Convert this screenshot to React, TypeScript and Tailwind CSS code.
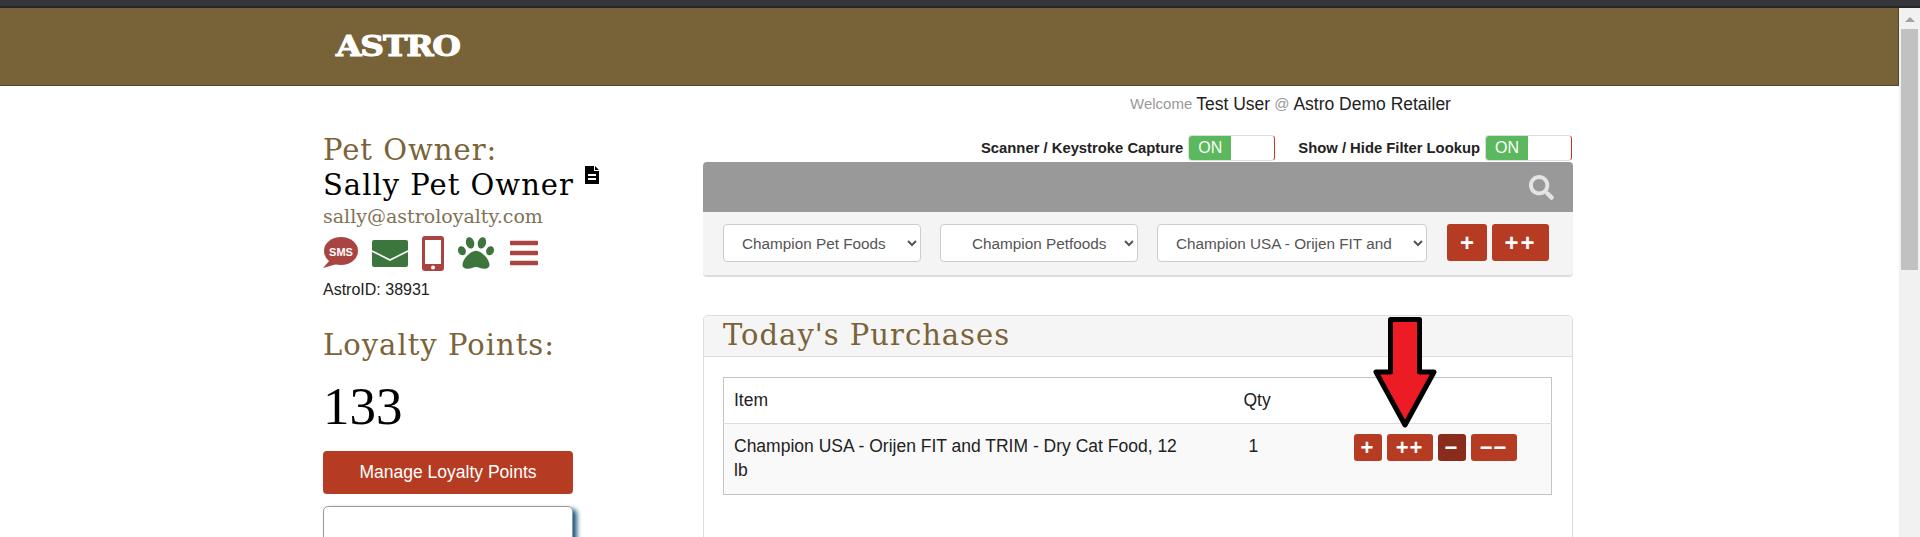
import { FaBars, FaPaw, FaSearch } from 'react-icons/fa';

const headingFont = "font-['DejaVu_Serif',serif]";

function ToggleRow({ label }: { label: string }) {
  return (
    <div className="flex items-center gap-[5px]">
      <span className="text-[14.8px] font-bold whitespace-nowrap text-[#222]">{label}</span>
      <div className="flex h-[26px] w-[87px] overflow-hidden rounded-[4px] border border-[#ddd] border-r-[#c9302c] p-0">
        <span className="flex h-full w-[42px] items-center justify-center bg-[#5cb85c] text-[16px] text-white">ON</span>
      </div>
    </div>
  );
}

function SmallButton({ label, wide, dark }: { label: string; wide?: boolean; dark?: boolean }) {
  return (
    <button
      className={`flex h-[27px] items-center justify-center rounded-[3px] text-[22px] leading-none font-bold tracking-[1px] text-white ${
        wide ? 'w-[46px]' : 'w-[28px]'
      } ${dark ? 'bg-[#8a2c1b]' : 'bg-[#b53b22]'}`}
    >
      {label}
    </button>
  );
}

function ContactIcons() {
  return (
    <div className="mt-[7px] flex h-[36px] items-center">
      <svg width="35" height="32" viewBox="0 0 35 32" className="mr-[14px]">
        <ellipse cx="18" cy="14" rx="17" ry="14" fill="#a94442" />
        <path d="M7 23 L0 31 L14 27 Z" fill="#a94442" />
        <text x="18" y="18.5" textAnchor="middle" fontSize="11" fontWeight="700" fill="#fff" fontFamily="Liberation Sans">
          SMS
        </text>
      </svg>
      <svg width="36" height="27" viewBox="0 0 36 27" className="mr-[14px]">
        <rect width="36" height="27" rx="2" fill="#3c763d" />
        <path d="M0 11 L18 20 L36 11" fill="none" stroke="#fff" strokeWidth="1.6" />
      </svg>
      <svg width="22" height="35" viewBox="0 0 22 35" className="mr-[14px]">
        <rect width="22" height="35" rx="3" fill="#a94442" />
        <rect x="3" y="4" width="16" height="24" fill="#fff" />
        <circle cx="11" cy="31.5" r="2" fill="#fff" />
      </svg>
      <FaPaw size={36} className="mr-[14px] text-[#3c763d]" />
      <FaBars size={32} className="text-[#a94442]" />
    </div>
  );
}

function Sidebar() {
  return (
    <aside className="w-[250px] shrink-0 pt-[47px]">
      <h3 className={`${headingFont} h-[35px] text-[29px] leading-[34px] tracking-[1px] text-[#7a6338]`}>Pet Owner:</h3>
      <div className="flex">
        <h3 className={`${headingFont} h-[34px] text-[29px] leading-[34px] tracking-[1px] whitespace-nowrap text-black`}>Sally Pet Owner</h3>
        <svg width="14" height="18" viewBox="0 0 14 18" className="mt-[-2px] ml-[11px] shrink-0">
          <path d="M0 0 H9 V5 H14 V18 H0 Z M10 0 L14 4 H10 Z M3 8 V10 H11 V8 Z M3 12 V14 H11 V12 Z" fill="#000" fillRule="evenodd" />
        </svg>
      </div>
      <div className={`${headingFont} mt-[2px] text-[19px] leading-[24px] whitespace-nowrap text-[#7f7256]`}>sally@astroloyalty.com</div>
      <ContactIcons />
      <div className="mt-[9px] text-[16px] leading-[20px] text-[#222]">AstroID: 38931</div>
      <h3 className={`${headingFont} mt-[28px] h-[34px] text-[29px] leading-[34px] tracking-[1px] text-[#7a6338]`}>Loyalty Points:</h3>
      <div className="mt-[14px] font-['Liberation_Serif',serif] text-[53px] leading-[60px] text-black">133</div>
      <button className="mt-[15px] block h-[43px] w-[250px] rounded-[4px] bg-[#b53b22] text-[17.5px] text-white">
        Manage Loyalty Points
      </button>
      <div className="mt-[12px] h-[60px] w-[250px] rounded-[5px] border border-[#999] bg-white shadow-[4px_3px_5px_#1d5a85]" />
    </aside>
  );
}

function Filters() {
  return (
    <div className="flex h-[65px] items-start gap-[19px] rounded-b-[4px] border-b-2 border-[#ddd] bg-[#f4f4f4] pt-[12px] pl-[20px]">
      <select
        defaultValue="a"
        className="h-[38px] w-[198px] rounded-[4px] border border-[#ccc] bg-white pl-[14px] text-[15.3px] text-[#555]"
      >
        <option value="a">Champion Pet Foods</option>
      </select>
      <select
        defaultValue="a"
        className="h-[38px] w-[198px] rounded-[4px] border border-[#ccc] bg-white pl-[27px] text-[15.3px] text-[#555]"
      >
        <option value="a">Champion Petfoods</option>
      </select>
      <select
        defaultValue="a"
        className="h-[38px] w-[270px] rounded-[4px] border border-[#ccc] bg-white pr-[18px] pl-[14px] text-[15.3px] text-[#555]"
      >
        <option value="a">Champion USA - Orijen FIT and TRIM - Dry Cat Food, 12 lb</option>
      </select>
      <div className="ml-[1px] flex gap-[5px]">
        <button className="h-[37px] w-[40px] rounded-[3px] bg-[#b53b22] text-[24px] leading-none font-bold text-white">+</button>
        <button className="h-[37px] w-[57px] rounded-[3px] bg-[#b53b22] text-[24px] leading-none font-bold tracking-[2px] text-white">++</button>
      </div>
    </div>
  );
}

function Purchases() {
  return (
    <section className="mt-[38px] h-[300px] rounded-t-[5px] border border-[#ddd]">
      <div className="h-[41px] rounded-t-[5px] border-b border-[#ddd] bg-[#f5f5f5] pl-[19px]">
        <h3 className={`${headingFont} text-[29px] leading-[38px] tracking-[1px] text-[#7a6338]`}>Today's Purchases</h3>
      </div>
      <div className="px-[19px] pt-[20px]">
        <table className="w-[829px] table-fixed border border-[#c4c4c4] text-[17.5px] text-[#222]">
          <tbody>
            <tr className="h-[46px]">
              <td className="w-[508px] px-[10px] align-middle">Item</td>
              <td className="px-[12px] align-middle">Qty</td>
              <td className="w-[210px]" />
            </tr>
            <tr className="h-[71px] border-t border-[#ddd] bg-[#f9f9f9]">
              <td className="pt-[10px] pr-[50px] pl-[10px] align-top leading-[24px]">Champion USA - Orijen FIT and TRIM - Dry Cat Food, 12 lb</td>
              <td className="px-[17px] pt-[10px] align-top leading-[24px]">1</td>
              <td className="pt-[10px] align-top">
                <div className="flex gap-[5px] pl-[12px]">
                  <SmallButton label="+" />
                  <SmallButton label="++" wide />
                  <SmallButton label="−" dark />
                  <SmallButton label="−−" wide />
                </div>
              </td>
            </tr>
          </tbody>
        </table>
      </div>
    </section>
  );
}

function Scrollbar() {
  return (
    <div className="flex w-[21px] shrink-0 flex-col items-center bg-[#f1f1f1]">
      <div className="mt-[9px] h-0 w-0 border-x-[5px] border-b-[5px] border-x-transparent border-b-[#a3a3a3]" />
      <div className="mt-[7px] h-[241px] w-[17px] bg-[#c1c1c1]" />
    </div>
  );
}

export default function App() {
  return (
    <div className="relative flex h-[537px] flex-col overflow-hidden bg-white font-['Liberation_Sans',sans-serif]">
      <div className="h-[8px] shrink-0 border-b-2 border-[#26272a] bg-[#35363a]" />
      <div className="flex min-h-0 flex-1">
        <div className="min-w-0 flex-1">
          <header className="h-[78px] border-r border-b border-[#54452a] bg-[#786238] pt-[22px] pl-[336px]">
            <span className="inline-block origin-left scale-x-[1.22] font-['DejaVu_Serif',serif] text-[27px] leading-[34px] font-bold tracking-[-1px] text-white [-webkit-text-stroke:1px_white]">
              ASTRO
            </span>
          </header>
          <div className="flex pl-[323px]">
            <Sidebar />
            <main className="ml-[130px] w-[870px]">
              <div className="flex h-[37px] items-center pl-[427px] text-[17.5px] whitespace-nowrap text-[#222]">
                <span className="mr-[4px] text-[15px] text-[#999]">Welcome</span>
                Test User
                <span className="mx-[4px] text-[15px] text-[#999]">@</span>
                Astro Demo Retailer
              </div>
              <div className="mt-[12px] flex h-[27px] items-start justify-end gap-[23px] pr-[1px]">
                <ToggleRow label="Scanner / Keystroke Capture" />
                <ToggleRow label="Show / Hide Filter Lookup" />
              </div>
              <div className="flex h-[50px] items-center justify-end rounded-t-[4px] bg-[#999] pr-[19px]">
                <FaSearch size={25} className="text-[#e4e4e4]" />
              </div>
              <Filters />
              <Purchases />
            </main>
          </div>
        </div>
        <Scrollbar />
      </div>
      <svg width="76" height="118" viewBox="0 0 76 118" className="absolute top-[315px] left-[1367px]">
        <path d="M23.5 4.5 H52.5 V57 H67 L38 110 L9 57 H23.5 Z" fill="#ed1c24" stroke="#000" strokeWidth="5" strokeLinejoin="round" />
      </svg>
    </div>
  );
}
